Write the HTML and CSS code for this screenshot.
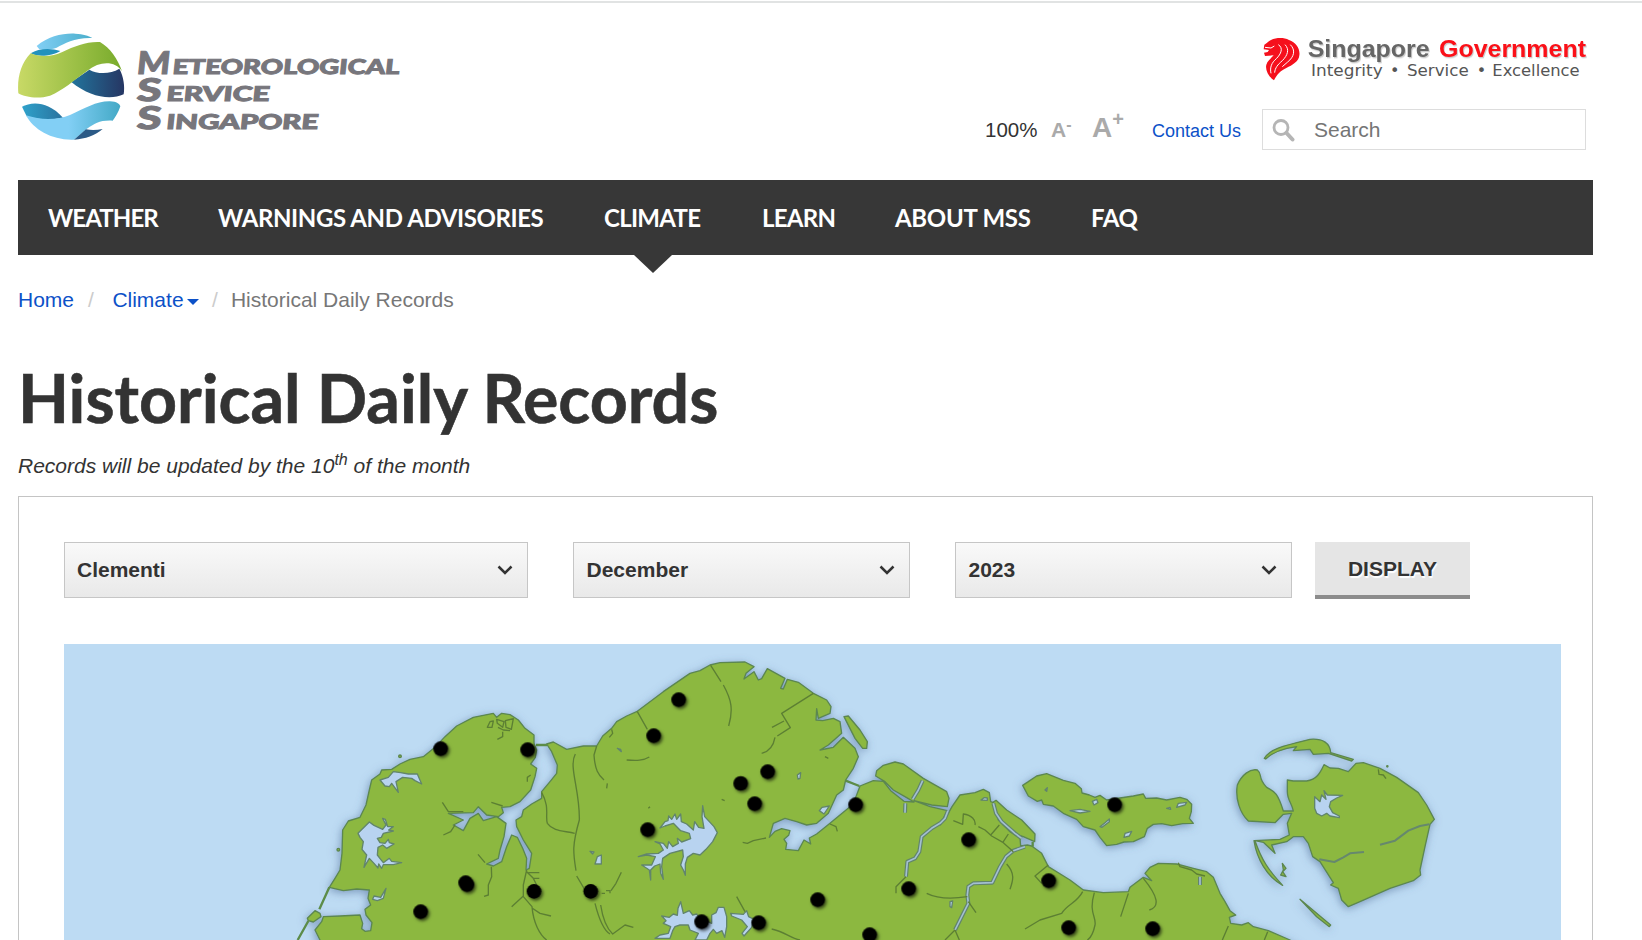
FILE: index.html
```
<!DOCTYPE html>
<html lang="en">
<head>
<meta charset="utf-8">
<title>Historical Daily Records</title>
<link rel="stylesheet" href="styles.css">
</head>
<body>
<div class="page">
<header class="header">
  <svg class="logo" width="384" height="110" viewBox="54 90 1152 330" role="img">
    <defs>
      <linearGradient id="green"><stop offset="0" stop-color="#c8d966"/><stop offset="1" stop-color="#78ab2c"/></linearGradient>
      <linearGradient id="sky"><stop offset="0" stop-color="#82cff5"/><stop offset="1" stop-color="#4aaecb"/></linearGradient>
      <linearGradient id="navy"><stop offset="0" stop-color="#22749c"/><stop offset="1" stop-color="#263663"/></linearGradient>
      <linearGradient id="teal"><stop offset="0" stop-color="#2fa2cb"/><stop offset="1" stop-color="#2a729e"/></linearGradient>
      <linearGradient id="low"><stop offset="0" stop-color="#82cff5"/><stop offset=".45" stop-color="#82cff5"/><stop offset="1" stop-color="#43a9c6"/></linearGradient>
    </defs>
    <path fill="url(#sky)" d="M110 138C145 108 190 99 226 101C250 102 265 107 277 114C225 112 195 130 170 143C150 150 130 150 118 148Z"/>
    <path fill="#2292bd" d="M92 160C115 144 155 144 181 153C160 166 115 174 92 160Z"/>
    <path fill="url(#navy)" d="M214 246L268 209C290 222 330 224 358 206C371 230 375 260 371 283C330 302 270 291 214 246Z"/>
    <path fill="url(#green)" d="M92 160C125 174 160 168 187 156C225 138 260 124 300 126C330 143 354 178 366 214C345 182 300 183 262 212C220 242 190 270 150 287C115 298 75 292 55 280C51 235 62 190 92 160Z"/>
    <path fill="url(#teal)" d="M66 320C95 304 145 303 189 353C145 363 100 357 80 349Z"/>
    <path fill="url(#low)" d="M78 346C125 362 175 359 210 345C255 325 290 303 330 304C350 305 359 312 361 319C356 336 347 350 338 362C300 360 285 370 260 387L222 419C160 422 100 390 78 346Z"/>
    <path fill="#2b5a86" d="M222 419L258 388C275 391 292 390 308 387C286 406 256 417 222 419Z"/>
    <g class="wordmark">
      <g transform="translate(0 222) skewX(-6)"><text x="408" y="0" textLength="100" lengthAdjust="spacingAndGlyphs" font-size="94">M</text><text x="516" y="0" textLength="681" lengthAdjust="spacingAndGlyphs" font-size="61">ETEOROLOGICAL</text></g>
      <g transform="translate(0 304) skewX(-6)"><text x="408" y="0" textLength="74" lengthAdjust="spacingAndGlyphs" font-size="94">S</text><text x="497" y="0" textLength="310" lengthAdjust="spacingAndGlyphs" font-size="61">ERVICE</text></g>
      <g transform="translate(0 387) skewX(-6)"><text x="408" y="0" textLength="74" lengthAdjust="spacingAndGlyphs" font-size="94">S</text><text x="497" y="0" textLength="456" lengthAdjust="spacingAndGlyphs" font-size="61">INGAPORE</text></g>
    </g>
  </svg>
  <div class="tools">
    <svg class="gov" width="328" height="50" viewBox="38 30 984 150" role="img">
      <path fill="#f5101c" d="M42 62C50 58 54 52 62 48C78 41 100 40 116 48C138 55 150 76 147 94C146 112 126 124 108 132C88 142 80 152 71 169C54 158 44 138 48 122C52 108 64 102 70 94L44 96L41 86L52 84L56 78L40 76Z"/>
      <path fill="none" stroke="#fff" stroke-width="3" d="M44 70L62 72L72 66M84 62C100 72 92 90 78 104C64 116 58 130 62 148M104 62C118 76 112 94 96 110C82 122 74 132 73 146M120 62C136 78 132 98 112 114L96 128"/>
      <g class="gov-name">
        <text x="172" y="99" textLength="366" lengthAdjust="spacingAndGlyphs" fill="#666">Singapore</text>
        <text x="566" y="99" textLength="441" lengthAdjust="spacingAndGlyphs" fill="#fb1018">Government</text>
      </g>
      <g class="gov-motto">
        <text x="182" y="156" textLength="215" lengthAdjust="spacingAndGlyphs">Integrity</text>
        <text x="419" y="156">•</text>
        <text x="470" y="156" textLength="185" lengthAdjust="spacingAndGlyphs">Service</text>
        <text x="679" y="156">•</text>
        <text x="726" y="156" textLength="262" lengthAdjust="spacingAndGlyphs">Excellence</text>
      </g>
    </svg>
    <div class="toolbar">
      <span class="zoom">100%</span>
      <span class="smaller">A<sup>-</sup></span>
      <span class="larger">A<sup>+</sup></span>
      <a class="contact">Contact Us</a>
      <div class="search">
        <svg width="24" height="24" viewBox="0 0 24 24" fill="none" stroke="#b5b5b5"><circle cx="9" cy="9.500" r="7" stroke-width="2.800"/><path d="M14.500 15L20.500 21.500" stroke-width="4" stroke-linecap="round"/></svg>
        <span>Search</span>
      </div>
    </div>
  </div>
</header>
<nav class="nav">
  <a class="n1">WEATHER</a><a class="n2">WARNINGS AND ADVISORIES</a><a class="n3 active">CLIMATE</a><a class="n4">LEARN</a><a class="n5">ABOUT MSS</a><a class="n6">FAQ</a>
</nav>
<div class="crumbs"><a>Home</a><i class="sep1">/</i><a>Climate</a><b class="caret"></b><i class="sep2">/</i><span>Historical Daily Records</span></div>
<h1 class="title"><span>Historical Daily Records</span></h1>
<p class="note">Records will be updated by the 10<sup>th</sup> of the month</p>
<section class="panel">
  <div class="form">
    <div class="select station">Clementi<svg width="16" height="10" viewBox="0 0 16 10"><path d="M1.500 1.500L8 8L14.500 1.500"/></svg></div>
    <div class="select">December<svg width="16" height="10" viewBox="0 0 16 10"><path d="M1.500 1.500L8 8L14.500 1.500"/></svg></div>
    <div class="select">2023<svg width="16" height="10" viewBox="0 0 16 10"><path d="M1.500 1.500L8 8L14.500 1.500"/></svg></div>
    <div class="button">DISPLAY</div>
  </div>
  <svg class="map" width="1497" height="296" viewBox="192 12 4491 888">
    <defs>
      <filter id="coast" x="-5%" y="-10%" width="110%" height="125%"><feDropShadow dx="-3" dy="6" stdDeviation="12" flood-color="#4a6390" flood-opacity=".55"/></filter>
      <filter id="pinshadow" x="-50%" y="-50%" width="220%" height="220%"><feDropShadow dx="5" dy="6" stdDeviation="4" flood-color="#000" flood-opacity=".6"/></filter>
      <circle id="pin" r="22"/>
      <g id="rivers">
        <path d="M2844 512L2835 535L2820 550L2795 565L2765 590L2758 635L2745 655L2722 665L2718 710"/>
        <path d="M3075 620L3040 632L3018 650L3000 680L2977 728L2920 730L2905 740L2902 765L2905 790L2880 840L2865 870"/>
        <path d="M2768 422L2755 450L2738 478M2716 490L2715 518M2980 490L2988 520L3005 545L3045 580L3065 595M3600 710V735"/>
      </g>
    </defs>
    <rect x="192" y="12" width="4491" height="888" fill="#bddbf3"/>
    <g class="land" filter="url(#coast)">
      <path d="M960 960L960 900L945 870L965 845L970 830L1020 828L1080 825L1088 850L1085 866L1095 874L1112 872L1116 848L1098 825L1095 808L1112 795L1104 775L1108 750L1070 747L1030 752L988 742L1005 715L1020 690L1026 640L1028 570L1045 543L1080 532L1098 495L1108 450L1115 420L1140 402L1145 390L1175 388L1200 372L1230 358L1270 350L1305 322L1335 290L1370 258L1420 232L1480 220L1490 232L1505 220L1530 224L1555 240L1575 265L1602 285L1602 310L1610 330L1606 352L1592 372L1610 385L1605 410L1592 450L1560 485L1530 500L1505 502L1510 518L1495 530L1460 525L1435 500L1420 518L1345 520L1390 540L1360 555L1390 572L1410 535L1435 520L1450 542L1490 530L1518 550L1512 590L1500 630L1495 655L1460 672L1480 678L1505 665L1520 620L1535 585L1552 592L1568 625L1580 655L1578 690L1588 685L1595 640L1570 600L1550 560L1548 540L1565 530L1570 510L1595 492L1625 475L1625 455L1650 425L1670 400L1672 375L1655 335L1640 312L1660 306L1700 328L1750 318L1790 318L1808 288L1835 265L1850 245L1880 228L1910 215L1990 155L2070 100L2100 92L2130 75L2160 68L2235 66L2262 80L2238 100L2232 117L2262 95L2275 120L2285 116L2302 86L2355 115L2342 145L2350 147L2362 118L2395 127L2440 160L2480 180L2493 200L2490 220L2455 235L2450 206L2448 240L2468 242L2500 235L2520 245L2525 280L2485 315L2460 330L2500 322L2530 292L2565 325L2575 350L2560 385L2537 420L2530 450L2510 465L2485 520L2450 550L2420 555L2390 545L2355 535L2320 550L2308 592L2325 574L2345 566L2370 572L2366 586L2352 598L2360 610L2357 628L2395 632L2412 600L2432 612L2428 594L2450 582L2490 550L2550 500L2568 470L2580 438L2620 422L2650 424L2672 452L2712 484L2742 486L2720 473L2680 450L2655 425L2627 408L2630 392L2650 376L2685 366L2710 372L2770 415L2840 455L2847 475L2842 500L2795 495L2742 482L2790 500L2842 512L2820 555L2845 520L2856 500L2880 465L2925 458L2950 448L2968 458L2972 485L2980 488L2995 540L3030 575L3060 595L3062 618L3082 615L3095 618L3125 640L3145 680L3210 720L3250 750L3310 758L3385 755L3390 742L3430 712L3455 722L3435 700L3450 682L3475 670L3530 672L3580 685L3620 695L3640 712L3660 760L3675 785L3690 812L3707 825L3688 832L3692 850L3725 855L3745 848L3760 860L3805 872L3870 900L3960 960Z"/>
      <path d="M2980 486L2988 481L3020 510L3065 540L3105 582L3104 605L3070 590L3040 580L3010 555L2990 525Z"/>
      <path d="M2532 230L2545 228L2580 270L2602 305L2600 325L2588 325L2565 295Z"/>
      <path d="M3068 436L3085 425L3110 408L3140 401L3190 421L3225 430L3244 446L3246 459L3268 465L3285 472L3300 466L3320 480L3400 468L3430 462L3437 475L3470 474L3500 480L3540 472L3560 478L3575 493L3574 515L3568 535L3580 550L3548 551L3515 557L3485 551L3460 553L3442 565L3433 590L3400 605L3372 606L3350 613L3320 617L3300 592L3285 570L3250 560L3230 538L3190 520L3160 498L3130 493L3125 480L3112 484L3085 468Z"/>
      <path d="M3712 435C3725 405 3750 385 3772 390C3790 405 3770 410 3800 442C3820 455 3830 450 3850 513L3880 513C3876 490 3862 480 3862 455L3862 420L3880 423L3920 423C3950 418 3960 400 3972 374L3990 384L4015 385L4045 395L4068 370L4090 368L4140 385L4190 412L4255 458L4280 495L4303 538L4290 553L4275 620L4260 690L4262 705L4240 722L4170 745L4080 785L4045 800L4025 780L4015 745L3992 735L4000 728L3960 665L3938 650L3925 610L3910 590L3880 590L3860 605L3815 615L3825 640L3790 607L3765 602C3785 660 3805 690 3848 736C3800 710 3770 655 3762 602L3840 598L3868 585L3862 550L3875 520L3850 523L3825 548L3745 543C3720 520 3705 475 3712 435Z"/>
      <path d="M3793 355C3810 325 3860 315 3930 298C3970 295 3990 310 3992 338L4060 358L4055 363L3985 340L3940 343L3930 328L3880 332L3890 320C3850 325 3815 340 3797 357Z"/>
      <path d="M3900 778L3992 855L3988 860L3950 830ZM3847 670L3858 685L3848 695L3858 710L3842 705L3850 690Z"/>
      <circle cx="1200" cy="349" r="4"/><circle cx="1015" cy="629" r="4"/><circle cx="4162" cy="379" r="2"/>
      <path d="M922 835L945 812L960 820L963 830L940 846L925 842Z"/>
    </g>
    <path class="causeway" d="M893 900L925 843M958 808L988 742M1608 315H1642M2537 422L2578 438M3098 605V620"/>
    <g class="lakes">
      <path d="M1074 580L1108 546L1122 556L1148 568L1158 555L1148 535L1156 538L1163 560L1180 560L1166 570L1180 573L1150 580L1144 592L1132 595L1140 608L1155 610L1165 598L1168 608L1182 612L1160 625L1148 615L1134 622L1132 645L1142 658L1150 668L1168 655L1175 664L1205 668L1180 674L1150 674L1145 685L1136 672L1134 684L1122 670L1108 655L1092 682L1100 645L1086 628L1090 605L1080 592Z"/>
      <path d="M1140 420L1165 412L1180 395L1202 398L1225 402L1252 402L1262 425L1265 432L1245 422L1235 415L1208 412L1188 425L1195 457L1175 430L1168 440L1155 438Z"/>
      <path d="M1122 768L1142 772L1158 745L1150 775L1132 782L1118 778ZM1785 672L1792 650L1804 645L1804 672ZM1770 634L1782 636L1778 642Z"/>
      <path d="M2108 497L2114 530L2128 545L2142 560L2152 578L2138 605L2118 628L2100 645L2080 640L2062 652L2056 672L2056 706L2050 690L2042 675L2050 650L2048 630L2010 640L1988 655L1985 680L1990 718L1982 700L1980 672L1964 678L1952 690L1952 720L1948 690L1925 675L1955 675L1966 650L1940 645L1915 650L1940 642L1975 640L1990 630L1980 612L1965 605L1990 610L2002 625L2006 605L2018 620L2035 610L2032 595L2045 606L2072 596L2068 580L2042 572L2020 550L1995 558L1980 564L1995 545L2004 542L2006 528L2015 538L2025 522L2030 538L2042 522L2044 545L2060 552L2080 570L2084 545L2096 562L2112 565L2106 530Z"/>
      <path d="M1985 828L2008 832L2020 822L2032 826L2034 805L2042 785L2050 820L2068 812L2078 825L2090 822L2100 835L2135 850L2135 825L2148 818L2155 802L2172 802L2180 830L2180 860L2174 892L2166 872L2150 880L2140 868L2130 880L2120 900L2085 900L2095 880L2070 870L2065 855L2040 855L2025 860L2018 872L2010 895L1965 895L1980 885L2005 880L2012 860L1990 850L1998 842Z"/>
      <path d="M2192 820L2230 823L2240 812L2246 830L2262 838L2255 862L2232 888L2226 880L2242 860L2225 840L2195 828ZM2392 405L2402 398L2400 415L2394 417ZM2458 512L2466 502L2488 498L2472 522ZM1852 325L1862 328L1864 335Z"/>
      <path d="M3944 470L3960 485L3965 465L3978 478L3972 452L3982 465L4028 466L4010 474L3992 485L3988 500L3998 518L4018 528L4018 533L3990 528L3980 520L3965 528L3950 520L3944 505Z"/>
      <path d="M3300 560L3315 548L3328 537L3328 545L3306 562ZM3372 592L3375 580L3395 574L3388 588ZM3530 502L3535 490L3560 487L3555 495ZM3210 512L3240 508L3270 514L3240 519ZM3277 484L3290 478L3294 488L3282 495ZM3500 505L3510 502L3512 508ZM3135 450L3142 443L3140 454ZM2850 785L2858 783L2855 803L2850 800Z"/>
      <path d="M2943 480L2952 473L2962 474V481Z"/>
    </g>
    <use class="bank" href="#rivers"/>
    <use class="water" href="#rivers"/>
    <path class="channel" d="M3958 658L4003 666L4030 652L4050 640L4092 636M4140 614L4185 602L4225 572L4260 558L4288 553"/>
    <g class="roads">
      <path d="M1462 262L1470 245L1480 243L1476 262ZM1490 238L1512 245L1508 262L1492 250ZM1516 242L1540 236L1534 268L1518 262ZM1494 262L1510 270L1530 272M1508 275L1508 290L1492 298"/>
      <path d="M2132 76L2163 125M2170 135C2195 180 2200 210 2186 258M1912 215L1942 268M1880 360C1910 362 1930 362 1948 351M1835 268L1838 280L1828 292M1790 318L1782 345C1785 390 1795 405 1812 420M1822 430L1820 445"/>
      <path d="M2440 160L2345 220L2371 263L2332 288M2352 243L2316 262M2325 292C2320 320 2305 335 2285 340M2228 607L2242 610L2260 602L2298 594M2490 552L2508 560L2512 574M2475 350L2485 355M2165 478L2174 482M1945 505L1950 500"/>
      <path d="M1625 458C1650 500 1635 530 1642 550C1660 575 1690 572 1724 580M1726 342C1705 380 1740 450 1738 540C1715 620 1720 640 1728 692M1730 708L1752 745M1785 790C1795 830 1810 870 1830 882M1802 795C1808 835 1820 865 1838 882L1875 855L1900 862M1805 760H1815M1818 752H1830V760M1833 752L1848 730L1864 697"/>
      <path d="M1327 487L1345 515H1390M1330 585L1352 575L1365 555M1474 487L1508 498M1434 643L1455 668M1474 680L1475 710L1465 735V765L1452 769M1580 690L1570 735V770L1596 800C1600 850 1620 885 1640 900M1570 768L1535 800M1596 804L1620 820L1653 828M1580 695L1600 715L1610 735M1585 698H1618M1600 715H1618M1592 405L1582 412V425"/>
      <path d="M2718 710L2688 740V760M2780 760C2810 775 2850 778 2902 770M2860 542L2888 553L2890 522C2915 525 2928 540 2925 555M2935 560L2955 570L2975 588L3010 608L3040 635M2972 585L2998 555M3008 608L3025 582M3020 672C3045 700 3040 720 3030 748M3145 675L3105 708L3125 730M3248 755C3230 790 3205 790 3185 820L3120 840L3075 867M3283 758C3265 820 3290 830 3285 855C3280 880 3270 895 3262 900M3385 760L3362 830M3430 715C3475 770 3480 800 3448 810M3535 668L3540 680L3575 690L3590 702L3615 708M2905 785L2928 818M2865 870L2835 900M2865 870L2878 900"/>
      <path d="M3685 858L3667 900M3803 875L3793 900M2210 770L2235 815M2315 867C2355 875 2370 895 2400 900M4135 388L4137 403L4150 405L4158 416"/>
    </g>
    <g filter="url(#pinshadow)">
      <use href="#pin" x="1322" y="326"/><use href="#pin" x="1583" y="329"/><use href="#pin" x="1397" y="728"/><use href="#pin" x="1401" y="734"/><use href="#pin" x="1262" y="815"/><use href="#pin" x="1602" y="754"/><use href="#pin" x="1772" y="754"/>
      <use href="#pin" x="2036" y="179"/><use href="#pin" x="1961" y="287"/><use href="#pin" x="2222" y="430"/><use href="#pin" x="2303" y="395"/><use href="#pin" x="2264" y="491"/><use href="#pin" x="2567" y="494"/><use href="#pin" x="1943" y="569"/><use href="#pin" x="2453" y="779"/><use href="#pin" x="2726" y="746"/><use href="#pin" x="2105" y="845"/><use href="#pin" x="2276" y="848"/><use href="#pin" x="2609" y="884"/>
      <use href="#pin" x="2906" y="599"/><use href="#pin" x="3344" y="494"/><use href="#pin" x="3146" y="722"/><use href="#pin" x="3206" y="863"/><use href="#pin" x="3458" y="866"/>
    </g>
  </svg>
</section>
</div>
</body>
</html>
```
FILE: styles.css
```
* { box-sizing: border-box; }
html { overflow: hidden; }
body { margin: 0; height: 940px; overflow: hidden; background: #fff; color: #333; font: 21px/24px "Liberation Sans", Arial, sans-serif; }
.page { margin-top: 1px; border-top: 2px solid #e1e3e3; padding: 0 49px 0 18px; }
.header { display: flex; justify-content: space-between; height: 177px; padding-top: 27px; }
.logo { display: block; }
.wordmark { font-family: Lato, sans-serif; font-weight: 900; fill: #77767c; stroke: #77767c; stroke-width: 3; }
.tools { display: flex; flex-direction: column; align-items: flex-end; padding-right: 7px; }
.gov { margin: 4px -5px 0 0; display: block; }
.gov-name { font: bold 74px "Liberation Sans", sans-serif; filter: drop-shadow(3px 4px 2px #ccc); }
.gov-motto { font: 48px "DejaVu Sans", sans-serif; fill: #555; }
.toolbar { display: flex; align-items: center; height: 41px; margin-top: 25px; }
.zoom { width: 66px; font-size: 20.5px; }
.smaller, .larger { color: #aaa; font-weight: bold; line-height: 24px; }
.smaller { width: 41px; font-size: 21px; }
.larger { width: 60px; font-size: 28px; position: relative; top: -2px; }
.toolbar sup { line-height: 0; vertical-align: baseline; position: relative; }
.smaller sup { font-size: 16px; top: -7px; }
.larger sup { font-size: 20px; top: -11px; }
.contact { width: 110px; font-size: 18px; color: #0c51c8; padding-top: 2px; }
.search { display: flex; align-items: center; width: 324px; height: 41px; border: 1px solid #ddd; padding-left: 9px; color: #757575; }
.search span { margin-left: 18px; }
.nav { display: flex; align-items: center; height: 75px; padding-left: 30px; background: #373737; color: #fff; font: bold 24px/77px Lato, sans-serif; white-space: nowrap; }
.n1 { width: 170px; letter-spacing: -.9px; } .n2 { width: 386px; letter-spacing: -.4px; } .n3 { width: 158px; letter-spacing: -.7px; } .n4 { width: 133px; letter-spacing: -.7px; } .n5 { width: 196px; letter-spacing: -.3px; } .n6 { letter-spacing: -.4px; }
.active { position: relative; }
.active::after { content: ""; position: absolute; top: 76px; left: 30px; border: 19px solid transparent; border-top: 18px solid #373737; border-bottom: 0; }
.crumbs { display: flex; height: 24px; margin-top: 33px; color: #777; }
.crumbs a { color: #0c51c8; }
.crumbs i { color: #ccc; font-style: normal; }
.sep1 { margin: 0 18.5px 0 14px; }
.sep2 { margin: 0 13px; }
.caret { margin: 11px 0 0 3.500px; height: 6px; border: 6px solid transparent; border-top-color: #0c51c8; border-bottom: 0; }
.title { margin: 41px 0 0; height: 90px; font: bold 66px/90px Lato, sans-serif; white-space: nowrap; }
.title span { display: inline-block; transform-origin: 0 50%; transform: scaleX(1.004); -webkit-text-stroke: .6px #333; }
.note { margin: 1px 0 9px; height: 43px; line-height: 43px; font-style: italic; }
.note sup { font-size: 16px; line-height: 0; vertical-align: 8px; }
.panel { border: 1px solid #c4c4c4; border-bottom: 0; height: 444px; padding: 45px 0 0 45px; }
.form { display: flex; height: 57px; }
.select { display: flex; align-items: center; justify-content: space-between; width: 337px; height: 56px; margin-right: 45px; padding: 0 14px 0 12.5px; border: 1px solid #c6c6c6; background: linear-gradient(#f9f9f9, #e9e9e9); font-weight: bold; }
.station { width: 464px; padding-left: 12px; }
.select + .select + .select { margin-right: 23px; }
.select path { fill: none; stroke: #333; stroke-width: 2.5; }
.button { width: 155px; height: 57px; border-bottom: 4px solid #8c8c8c; background: #e5e5e5; font-weight: bold; line-height: 53px; text-align: center; text-shadow: 1px 2px 1px #fff; }
.map { display: block; margin-top: 45px; }
.land path, .land circle { fill: #8cb840; stroke: #5c8750; stroke-width: 4; stroke-linejoin: round; }
.lakes path { fill: #b8d3f0; stroke: #62856b; stroke-width: 4; stroke-linejoin: round; }
.bank, .water, .channel { fill: none; stroke-linejoin: round; }
.bank { stroke: #62856b; stroke-width: 12; }
.water { stroke: #a3bfd2; stroke-width: 5; }
.channel { stroke: #66886d; stroke-width: 6; }
.roads path { fill: none; stroke: #5c7f33; stroke-width: 4; stroke-linejoin: round; }
.causeway { fill: none; stroke: #5c8c48; stroke-width: 7; }
```
